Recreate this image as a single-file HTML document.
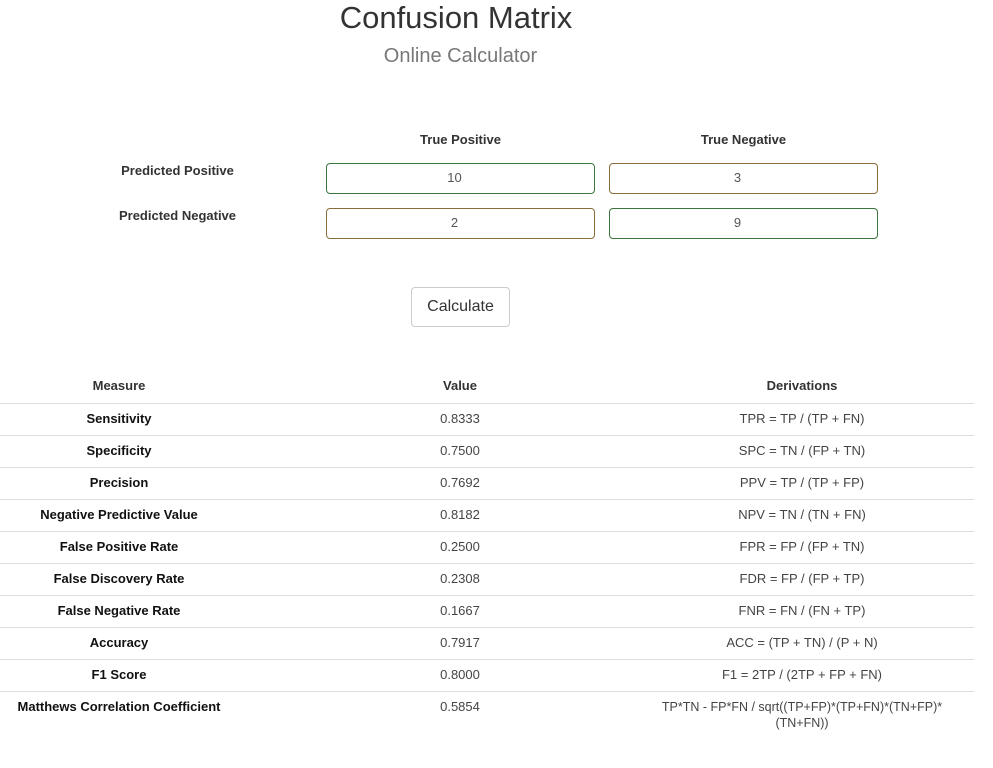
<!DOCTYPE html>
<html><head><meta charset="utf-8"><style>
body{margin:0;width:993px;height:768px;background:#fff;font-family:"Liberation Sans",Arial,sans-serif;color:#333;position:relative;overflow:hidden}
.a{position:absolute}
h1{position:absolute;margin:0;top:0;left:0;width:912px;text-align:center;font-size:31px;font-weight:normal;line-height:36px}
.sub{top:45px;left:0;width:921px;text-align:center;font-size:20px;color:#777}
.lbl{font-size:13px;font-weight:bold;text-align:center}
.in{box-sizing:border-box;height:31px;border:1px solid #3c763d;border-radius:4px;font-size:13px;color:#555;text-align:center;line-height:28px;width:269px;padding-right:12px}
.br{border-color:#8a6d3b}
.btn{left:411px;top:287px;width:99px;height:40px;box-sizing:border-box;border:1px solid #ccc;border-radius:4px;font-size:16px;text-align:center;line-height:38px}
.row{position:absolute;left:0;width:974px;height:32px;font-size:13px}
.row div{position:absolute;top:0;line-height:32px;text-align:center}
.c1{left:0;width:238px;font-weight:bold;color:#111}
.c2{left:238px;width:444px;color:#444}
.c3{left:652px;width:300px;color:#444}
.line{position:absolute;left:0;width:974px;height:1px;background:#ddd}
</style></head><body>
<h1>Confusion Matrix</h1>
<div class="a sub">Online Calculator</div>
<div class="a lbl" style="left:326px;width:269px;top:132px">True Positive</div>
<div class="a lbl" style="left:609px;width:269px;top:132px">True Negative</div>
<div class="a lbl" style="left:100px;width:155px;top:163px">Predicted Positive</div>
<div class="a lbl" style="left:100px;width:155px;top:208px">Predicted Negative</div>
<div class="a in" style="left:326px;top:163px">10</div>
<div class="a in br" style="left:609px;top:163px">3</div>
<div class="a in br" style="left:326px;top:208px">2</div>
<div class="a in" style="left:609px;top:208px">9</div>
<div class="a btn">Calculate</div>

<div class="row" style="top:370px"><div class="c1" style="color:#333">Measure</div><div class="c2" style="font-weight:bold;color:#333">Value</div><div class="c3" style="font-weight:bold;color:#333">Derivations</div></div>
<div class="line" style="top:403px"></div>
<div class="row" style="top:403px"><div class="c1">Sensitivity</div><div class="c2">0.8333</div><div class="c3">TPR = TP / (TP + FN)</div></div>
<div class="line" style="top:435px"></div>
<div class="row" style="top:435px"><div class="c1">Specificity</div><div class="c2">0.7500</div><div class="c3">SPC = TN / (FP + TN)</div></div>
<div class="line" style="top:467px"></div>
<div class="row" style="top:467px"><div class="c1">Precision</div><div class="c2">0.7692</div><div class="c3">PPV = TP / (TP + FP)</div></div>
<div class="line" style="top:499px"></div>
<div class="row" style="top:499px"><div class="c1">Negative Predictive Value</div><div class="c2">0.8182</div><div class="c3">NPV = TN / (TN + FN)</div></div>
<div class="line" style="top:531px"></div>
<div class="row" style="top:531px"><div class="c1">False Positive Rate</div><div class="c2">0.2500</div><div class="c3">FPR = FP / (FP + TN)</div></div>
<div class="line" style="top:563px"></div>
<div class="row" style="top:563px"><div class="c1">False Discovery Rate</div><div class="c2">0.2308</div><div class="c3">FDR = FP / (FP + TP)</div></div>
<div class="line" style="top:595px"></div>
<div class="row" style="top:595px"><div class="c1">False Negative Rate</div><div class="c2">0.1667</div><div class="c3">FNR = FN / (FN + TP)</div></div>
<div class="line" style="top:627px"></div>
<div class="row" style="top:627px"><div class="c1">Accuracy</div><div class="c2">0.7917</div><div class="c3">ACC = (TP + TN) / (P + N)</div></div>
<div class="line" style="top:659px"></div>
<div class="row" style="top:659px"><div class="c1">F1 Score</div><div class="c2">0.8000</div><div class="c3">F1 = 2TP / (2TP + FP + FN)</div></div>
<div class="line" style="top:691px"></div>
<div class="row" style="top:691px"><div class="c1">Matthews Correlation Coefficient</div><div class="c2">0.5854</div><div class="c3" style="line-height:16px;top:8px;left:622px;width:360px;font-size:12.5px">TP*TN - FP*FN / sqrt((TP+FP)*(TP+FN)*(TN+FP)*<br>(TN+FN))</div></div>
</body></html>
